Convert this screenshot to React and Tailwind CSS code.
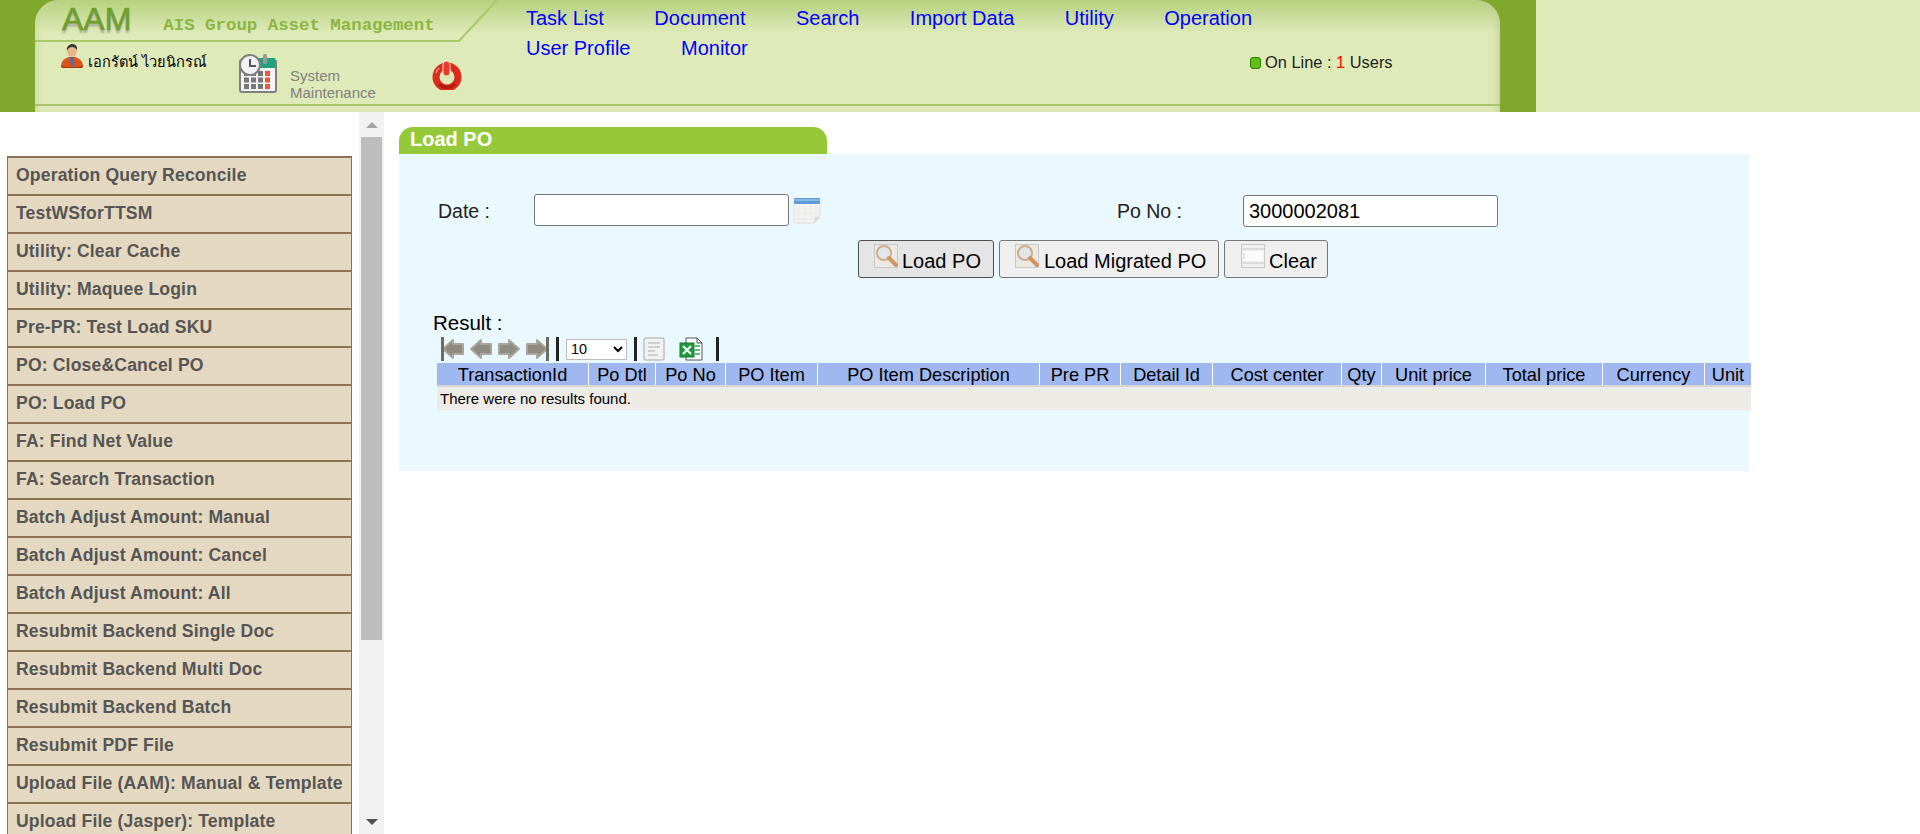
const MENU = [
  'Operation Query Reconcile',
  'TestWSforTTSM',
  'Utility: Clear Cache',
  'Utility: Maquee Login',
  'Pre-PR: Test Load SKU',
  'PO: Close&Cancel PO',
  'PO: Load PO',
  'FA: Find Net Value',
  'FA: Search Transaction',
  'Batch Adjust Amount: Manual',
  'Batch Adjust Amount: Cancel',
  'Batch Adjust Amount: All',
  'Resubmit Backend Single Doc',
  'Resubmit Backend Multi Doc',
  'Resubmit Backend Batch',
  'Resubmit PDF File',
  'Upload File (AAM): Manual & Template',
  'Upload File (Jasper): Template',
]

const NAV = ['Task List', 'Document', 'Search', 'Import Data', 'Utility', 'Operation', 'User Profile', 'Monitor']

const COLUMNS = [
  { label: 'TransactionId', w: 'w-[152px]' },
  { label: 'Po Dtl', w: 'w-[67px]' },
  { label: 'Po No', w: 'w-[70px]' },
  { label: 'PO Item', w: 'w-[92px]' },
  { label: 'PO Item Description', w: 'w-[222px]' },
  { label: 'Pre PR', w: 'w-[81px]' },
  { label: 'Detail Id', w: 'w-[92px]' },
  { label: 'Cost center', w: 'w-[129px]' },
  { label: 'Qty', w: 'w-[40px]' },
  { label: 'Unit price', w: 'w-[104px]' },
  { label: 'Total price', w: 'w-[117px]' },
  { label: 'Currency', w: 'w-[102px]' },
  { label: 'Unit', w: 'w-[46px]' },
]

function Avatar() {
  return (
    <svg width="24" height="24" viewBox="0 0 24 24" className="shrink-0">
      <path d="M1 22c0-5 4-8 8-9h6c4 1 8 4 8 9 0 1-1 2-2 2H3c-1 0-2-1-2-2z" fill="#d9541a" />
      <path d="M1 22c0 1 1 2 2 2h18c1 0 2-1 2-2-3 1-6 1-11 1s-8 0-11-1z" fill="#a83410" />
      <path d="M10 13l2 1 2-1 -1 9h-2z" fill="#3f6fc0" />
      <ellipse cx="12" cy="7" rx="5" ry="6" fill="#e8b48c" />
      <path d="M7 7c-1-5 3-7 5-7s6 1 5 6c-1-2-3-3-5-3s-4 1-5 4z" fill="#3a3a38" />
    </svg>
  )
}

function CalendarClock() {
  return (
    <svg width="40" height="40" viewBox="0 0 40 40" className="shrink-0">
      <rect x="3" y="6" width="36" height="32" rx="2" fill="#f4f4f4" stroke="#7f7f7f" strokeWidth="2" />
      <rect x="11" y="4" width="27" height="10" fill="#1fa27e" />
      <rect x="26" y="0" width="4" height="10" rx="1.5" fill="#9a9a9a" />
      {[0, 1, 2].map((r) =>
        [0, 1, 2, 3].map((c) => (
          <rect key={`${r}${c}`} x={7 + c * 7} y={17 + r * 6.5} width="5" height="5" fill={c === 3 ? '#ef5533' : '#777'} />
        )),
      )}
      <circle cx="13" cy="11" r="10" fill="#f2f2f2" stroke="#7f7f7f" strokeWidth="2" />
      <path d="M13 5v7h6" fill="none" stroke="#555" strokeWidth="2" />
    </svg>
  )
}

function PowerIcon() {
  return (
    <svg width="32" height="30" viewBox="0 0 32 30" className="shrink-0">
      <circle cx="16" cy="17" r="11" fill="none" stroke="#dc2a1c" strokeWidth="7" />
      <path d="M8 24a11 11 0 0 0 16 0" fill="none" stroke="#b01d12" strokeWidth="3" />
      <path d="M8 8a12 12 0 0 0-3 5" stroke="#f6938a" strokeWidth="1.5" fill="none" />
      <rect x="12" y="1" width="7" height="15" rx="3.5" fill="#e8392c" stroke="#dfeab9" strokeWidth="1" />
    </svg>
  )
}

function DateIcon() {
  return (
    <svg width="28" height="27" viewBox="0 0 28 27" className="shrink-0">
      <path d="M1 2h26v18l-6 6H1z" fill="#f3f3f1" stroke="#dcdcdc" />
      <rect x="1" y="1" width="26" height="6" rx="1" fill="#5b9bd6" />
      <path d="M1 3h26" stroke="#b9d9f2" />
      <path d="M6 8v17M12 8v17M18 8v17M23 8v12M2 12h24M2 17h24M2 22h20" stroke="#e9e9e7" />
      <path d="M21 26l1-6h5z" fill="#d8d8d6" />
    </svg>
  )
}

function SearchIcon() {
  return (
    <svg width="24" height="24" viewBox="0 0 24 24" className="shrink-0 self-start">
      <rect x="0.5" y="0.5" width="23" height="23" fill="#ece8e2" stroke="#c8c8c8" />
      <circle cx="10" cy="9" r="7" fill="#dfe7ec" stroke="#d0ad88" strokeWidth="2" />
      <path d="M15 14l7 7" stroke="#cf9560" strokeWidth="4" strokeLinecap="round" />
    </svg>
  )
}

function ClearIcon() {
  return (
    <svg width="24" height="24" viewBox="0 0 24 24" className="shrink-0 self-start">
      <rect x="0.5" y="0.5" width="23" height="23" fill="#f0f0f0" stroke="#c8c8c8" />
      <path d="M1 5h22M1 19h22" stroke="#c8c8c8" />
      <rect x="2" y="7" width="20" height="10" fill="#fbfbfb" />
      <path d="M3 9v6" stroke="#c8c8c8" />
    </svg>
  )
}

function PagerArrow({ dir, bar }) {
  const arrow = dir === 'left' ? 'M2 12l10-9v4h10v10H12v4z' : 'M22 12L12 3v4H2v10h10v4z'
  return (
    <svg width="24" height="24" viewBox="0 0 24 24" className="shrink-0">
      <path d={arrow} fill="#8f8b81" stroke="#aaa69c" strokeWidth="2" strokeLinejoin="round" />
      {bar === 'left' && <rect x="0" y="0" width="3" height="24" fill="#6f6b63" />}
      {bar === 'right' && <rect x="21" y="0" width="3" height="24" fill="#6f6b63" />}
    </svg>
  )
}

function Sep() {
  return <div className="w-[3px] h-[24px] bg-[#222] shrink-0" />
}

function DocIcon() {
  return (
    <svg width="22" height="24" viewBox="0 0 22 24" className="shrink-0">
      <rect x="1" y="1" width="20" height="22" rx="2" fill="#f1f1f1" stroke="#c0c0c0" strokeWidth="1.5" />
      <path d="M5 6h12M5 10h12M5 14h7M5 18h10" stroke="#c4c4c4" strokeWidth="1.5" />
    </svg>
  )
}

function ExcelIcon() {
  return (
    <svg width="24" height="24" viewBox="0 0 24 24" className="shrink-0">
      <path d="M7 1h11l5 5v17H7z" fill="#fff" stroke="#555" />
      <path d="M18 1v5h5" fill="none" stroke="#555" />
      <rect x="1" y="6" width="14" height="14" fill="#1f9a3c" stroke="#157a2c" />
      <path d="M4 9l8 8M12 9l-8 8" stroke="#fff" strokeWidth="2" />
      <path d="M16 9h5M16 13h5M16 17h5" stroke="#2aa84a" strokeWidth="1.5" />
    </svg>
  )
}

function Header() {
  return (
    <header className="flex h-[112px] shrink-0 bg-[#dfeab9]">
      <div className="w-[1536px] shrink-0 bg-[#80a82d] pl-[35px] pr-[36px] mr-[2px]">
        <div className="relative h-full rounded-t-[24px] bg-gradient-to-b from-[#b6d07e] via-[#dfeab9] via-[30%] to-[#dfeab9] shadow-[inset_-8px_0_8px_-6px_#c3cf95,inset_8px_0_8px_-6px_#c9dc9a] flex flex-col">
          <div className="flex flex-1 min-h-0">
            <div className="w-[491px] shrink-0 flex flex-col">
              <div className="relative w-[425px] h-[42px] border-b-2 border-[#a9c868] flex items-center pl-[27px] shrink-0">
                <span className="text-[32px] leading-none text-[#6d9f2e] [-webkit-text-stroke:0.6px_#6d9f2e] [text-shadow:0_3px_2px_#a9a99a] font-['Liberation_Sans'] mt-[-2px]">AAM</span>
                <span className="ml-[32px] text-[17.4px] font-bold text-[#8ab63f] font-['Liberation_Mono'] whitespace-nowrap mt-[12px]">AIS Group Asset Management</span>
                <svg width="40" height="42" viewBox="0 0 40 42" className="absolute left-[424px] top-0">
                  <path d="M0 41L38 0" stroke="#a9c868" strokeWidth="2" fill="none" />
                </svg>
              </div>
              <div className="flex items-start pl-[25px]">
                <div className="flex items-start w-[177px] mt-[2px]">
                  <Avatar />
                  <span className="ml-[4px] mt-[7px] text-[14.6px] text-black font-['Noto_Sans',sans-serif] whitespace-nowrap">เอกรัตน์ ไวยนิกรณ์</span>
                </div>
                <div className="mt-[12px] shrink-0">
                  <CalendarClock />
                </div>
                <div className="ml-[13px] mt-[25px] w-[100px] text-[15px] leading-[17px] text-[#808080] font-['Liberation_Sans'] shrink-0">
                  System Maintenance
                </div>
                <div className="ml-[41px] mt-[18px]">
                  <PowerIcon />
                </div>
              </div>
            </div>
            <nav className="w-[732px] shrink-0 flex flex-wrap content-start gap-x-[50.5px] pt-[3px] font-['Liberation_Sans'] text-[20px] leading-[30px] text-[#0000ff]">
              {NAV.map((n) => (
                <a key={n} href="#" className="whitespace-nowrap">{n}</a>
              ))}
            </nav>
            <div className="ml-[-8px] pt-[53px] flex items-start font-['Liberation_Sans'] text-[16.4px] leading-[18px] text-[#222] whitespace-nowrap">
              <span className="mt-[4px] mr-[4px] w-[11px] h-[12px] rounded-[3px] bg-[#5fc011] border border-[#2f7a08]" />
              <span>On Line : <span className="text-[#ff0000]">1</span> Users</span>
            </div>
          </div>
          <div className="h-[8px] shrink-0 border-t-2 border-[#a9c46a]" />
        </div>
      </div>
    </header>
  )
}

function Sidebar() {
  return (
    <aside className="w-[384px] shrink-0 flex h-full">
      <div className="w-[359px] shrink-0 pl-[7px] pr-[7px] pt-[44px] overflow-hidden">
        <ul className="border-t-2 border-[#8f7055] font-['Liberation_Sans']">
          {MENU.map((m) => (
            <li key={m} className="h-[38px] border-x border-b-2 border-[#8f7055] bg-[#e4d8c0] flex items-center pl-[8px] pb-[2px] text-[17.6px] tracking-[0.15px] font-bold text-[#555] whitespace-nowrap">
              {m}
            </li>
          ))}
        </ul>
      </div>
      <div className="w-[25px] shrink-0 bg-[#f1f1f1] flex flex-col items-center">
        <div className="h-[25px] w-full flex items-center justify-center shrink-0">
          <div className="w-0 h-0 border-x-[6px] border-x-transparent border-b-[6px] border-b-[#a3a3a3]" />
        </div>
        <div className="h-[503px] w-[21px] bg-[#bdbdbd] shrink-0" />
        <div className="flex-1" />
        <div className="h-[25px] w-full flex items-center justify-center shrink-0">
          <div className="w-0 h-0 border-x-[6px] border-x-transparent border-t-[6px] border-t-[#505050]" />
        </div>
      </div>
    </aside>
  )
}

function LoadPO() {
  return (
    <main className="flex-1 min-w-0 pl-[15px] pt-[15px] font-['Liberation_Sans']">
      <div className="w-[428px] h-[27px] rounded-t-[14px] bg-[#96c93a] pl-[11px] text-[20px] leading-[25px] font-bold text-white">
        Load PO
      </div>
      <div className="w-[1350px] h-[317px] bg-[#eaf8ff] pt-[40px]">
        <div className="flex items-center h-[32px]">
          <label className="w-[135px] pl-[39px] pt-[4px] shrink-0 text-[19.5px] text-[#222]">Date :</label>
          <input type="text" className="w-[255px] h-[32px] shrink-0 bg-white border border-[#767676] rounded-[3px] outline-none" />
          <div className="ml-[4px] mr-[296px] shrink-0">
            <DateIcon />
          </div>
          <label className="w-[126px] pt-[4px] shrink-0 text-[19.5px] text-[#222]">Po No :</label>
          <input type="text" readOnly value="3000002081" className="w-[255px] h-[32px] mt-[1px] pt-[2px] shrink-0 bg-white border border-[#767676] rounded-[3px] px-[5px] text-[20px] text-black outline-none" />
        </div>
        <div className="flex gap-[5px] mt-[14px] pl-[459px] text-[20px] text-black">
          <button className="w-[136px] h-[38px] flex items-start gap-[4px] pl-[15px] pt-[3px] bg-[#e5e5e5] border border-[#4f4f4f] rounded-[3px]">
            <SearchIcon />
            <span className="mt-[5px] leading-[24px]">Load PO</span>
          </button>
          <button className="w-[220px] h-[38px] flex items-start gap-[5px] pl-[15px] pt-[3px] bg-[#efefef] border border-[#767676] rounded-[3px]">
            <SearchIcon />
            <span className="mt-[5px] leading-[24px] whitespace-nowrap">Load Migrated PO</span>
          </button>
          <button className="w-[104px] h-[38px] flex items-start gap-[4px] pl-[16px] pt-[3px] bg-[#efefef] border border-[#767676] rounded-[3px]">
            <ClearIcon />
            <span className="mt-[5px] leading-[24px]">Clear</span>
          </button>
        </div>
        <div className="mt-[32px] pl-[34px] h-[27px] text-[20.5px] leading-[26px] text-black">Result :</div>
        <div className="flex items-center h-[24px] pl-[42px]">
          <PagerArrow dir="left" bar="left" />
          <div className="ml-[4px]"><PagerArrow dir="left" /></div>
          <div className="ml-[4px]"><PagerArrow dir="right" /></div>
          <div className="ml-[4px]"><PagerArrow dir="right" bar="right" /></div>
          <div className="ml-[7px]"><Sep /></div>
          <select className="ml-[7px] w-[61px] h-[21px] bg-white border border-[#bbb] text-[14.4px] text-black outline-none" defaultValue="10">
            <option>10</option>
            <option>20</option>
            <option>50</option>
          </select>
          <div className="ml-[7px]"><Sep /></div>
          <div className="ml-[6px]"><DocIcon /></div>
          <div className="ml-[14px]"><ExcelIcon /></div>
          <div className="ml-[13px]"><Sep /></div>
        </div>
        <div className="ml-[38px] mt-[2px] w-[1314px]">
          <div className="flex h-[22px] bg-[#a0b8f0]">
            {COLUMNS.map((c) => (
              <div key={c.label} className={`${c.w} shrink-0 border-r-[1.5px] border-white last:border-r-0 text-center text-[18.2px] leading-[24px] text-black whitespace-nowrap overflow-hidden`}>
                {c.label}
              </div>
            ))}
          </div>
          <div className="h-[25px] border-t-2 border-[#d4d4d4] bg-[#eeebe7] pl-[3px] text-[15px] leading-[23px] text-black">
            There were no results found.
          </div>
        </div>
      </div>
    </main>
  )
}

export default function App() {
  return (
    <div className="h-screen overflow-hidden bg-white flex flex-col">
      <Header />
      <div className="flex flex-1 min-h-0">
        <Sidebar />
        <LoadPO />
      </div>
    </div>
  )
}
